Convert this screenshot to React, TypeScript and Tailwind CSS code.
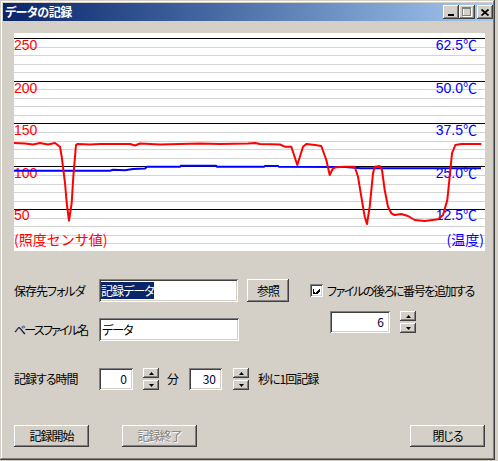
import React from "react";

const raised =
  "shadow-[inset_-1px_-1px_#404040,inset_1px_1px_#ffffff,inset_-2px_-2px_#808080,inset_2px_2px_#d4d0c8]";
const sunken =
  "shadow-[inset_1px_1px_#808080,inset_-1px_-1px_#ffffff,inset_2px_2px_#404040,inset_-2px_-2px_#d4d0c8]";
const jp = "font-['Noto_Sans_CJK_JP',sans-serif] [font-feature-settings:'palt']";

const red: [number, number][] = [
  [0, 110], [11, 110.5], [19, 111.5], [26, 110], [34, 111.5], [41, 110], [46, 113.7], [47.7, 123.7],
  [51, 150], [52.7, 170], [55, 187.7], [57.7, 170], [59.3, 143.7], [62, 112], [63.3, 111], [76, 111.5],
  [86, 111], [116, 111], [121, 112.5], [126, 110.5], [146, 111.5], [166, 111], [186, 110.5], [206, 111],
  [234, 110.5], [241, 110], [246, 111], [266, 111.5], [270.7, 113.7], [277.3, 113.7], [283.3, 132],
  [289, 113.7], [292.3, 111], [301, 112], [307.3, 113], [312.3, 127], [315.7, 142], [319, 135.3],
  [322.3, 134.3], [330.7, 133.7], [340.7, 133.7], [344, 143.7], [347.3, 163.7], [350.7, 183.7],
  [353, 191], [355.7, 173.7], [359, 140.3], [360.7, 133.7], [365.7, 133], [368, 137], [370.7, 157],
  [374, 173.7], [377.3, 180.3], [380.7, 182], [387.3, 181], [394, 183], [400.7, 187], [410.7, 188],
  [424, 186.3], [429, 182], [433.3, 167], [435.7, 143.7], [438, 120.3], [441.3, 112], [447.3, 111],
  [467.3, 111],
];

const blue: [number, number][] = [
  [0, 137.7], [96, 137.7], [99, 136.7], [111, 137.3], [119, 136], [131, 135.5], [133, 133.7],
  [166, 133.7], [167, 132.7], [202, 132.7], [203, 133.7], [250, 133.7], [251, 133], [264, 133],
  [265, 133.7], [331, 134], [347, 135.3], [467, 135.3],
];

const pts = (p: [number, number][]) => p.map(([x, y]) => `${x},${y}`).join(" ");

function Chart() {
  const majors = [5, 48, 90, 133, 176];
  const minors: number[] = [];
  for (let i = 1; i < 25; i++) {
    if (i % 5 !== 0) minors.push(Math.round(5 + i * 8.56));
  }
  const left = [
    ["250", 17],
    ["200", 60],
    ["150", 102],
    ["100", 145],
    ["50", 187],
  ] as const;
  const right = [
    ["62.5℃", 17],
    ["50.0℃", 60],
    ["37.5℃", 102],
    ["25.0℃", 145],
    ["12.5℃", 187],
  ] as const;
  return (
    <div className="h-[218px] w-[471px] bg-white">
      <svg width="471" height="218" viewBox="0 0 471 218" className="tracking-normal [font-feature-settings:normal]">
        <g shapeRendering="crispEdges">
          {minors.map((y) => (
            <line key={y} x1="0" x2="471" y1={y + 0.5} y2={y + 0.5} stroke="#d4d4d4" />
          ))}
          {majors.map((y) => (
            <line key={y} x1="0" x2="471" y1={y + 0.5} y2={y + 0.5} stroke="#000" />
          ))}
        </g>
        <g fontFamily="'Liberation Sans','Noto Sans CJK JP',sans-serif" fontSize="14">
          {left.map(([t, y]) => (
            <text key={t} x="0" y={y} fill="#ff0000">
              {t}
            </text>
          ))}
          {right.map(([t, y]) => (
            <text key={t} x="463" y={y} fill="#0000ff" textAnchor="end">
              {t}
            </text>
          ))}
        </g>
        <g fontFamily="'Noto Sans CJK JP',sans-serif" fontSize="14">
          <text x="0" y="212" fill="#ff0000">(照度センサ値)</text>
          <text x="470" y="212" fill="#0000ff" textAnchor="end">(温度)</text>
        </g>
        <polyline points={pts(blue)} fill="none" stroke="#0000ff" strokeWidth="2" />
        <polyline points={pts(red)} fill="none" stroke="#ff0000" strokeWidth="2" strokeLinejoin="round" />
      </svg>
    </div>
  );
}

function Button({ label, disabled, w = "w-[75px]", h = "h-[22px]" }: { label: string; disabled?: boolean; w?: string; h?: string }) {
  return (
    <div className={`${w} ${h} ${raised} flex shrink-0 items-center justify-center bg-[#d4d0c8] text-[12px]`}>
      <span className={disabled ? "text-[#808080] [text-shadow:1px_1px_#ffffff]" : "text-black"}>{label}</span>
    </div>
  );
}

function Spin() {
  return (
    <div className="flex h-[22px] w-[16px] shrink-0 flex-col justify-between">
      <div className={`${raised} flex h-[10px] items-center justify-center bg-[#d4d0c8]`}>
        <svg width="5" height="3" viewBox="0 0 5 3">
          <polygon points="2.5,0 5,3 0,3" fill="#000" />
        </svg>
      </div>
      <div className={`${raised} flex h-[10px] items-center justify-center bg-[#d4d0c8]`}>
        <svg width="5" height="3" viewBox="0 0 5 3">
          <polygon points="0,0 5,0 2.5,3" fill="#000" />
        </svg>
      </div>
    </div>
  );
}

function NumBox({ value, w }: { value: string; w: string }) {
  return (
    <div className={`${w} ${sunken} flex h-[22px] shrink-0 items-center justify-end bg-white pr-[6px] text-[12px] tracking-normal text-[#000040]`}>
      {value}
    </div>
  );
}

function TitleButton({ children, gap }: { children: React.ReactNode; gap?: boolean }) {
  return (
    <div className={`${raised} flex h-[14px] w-[16px] items-center justify-center bg-[#d4d0c8] ${gap ? "ml-[2px]" : ""}`}>
      {children}
    </div>
  );
}

export default function App() {
  return (
    <div className={`h-[461px] w-[498px] bg-[#d4d0c8] ${jp}`}>
      <div className="h-[460px] w-[495px] p-[3px] pr-[2px] shadow-[inset_-1px_-1px_#404040,inset_1px_1px_#d4d0c8,inset_-2px_-2px_#808080,inset_2px_2px_#ffffff]">
        <div className="flex h-[18px] items-center justify-between bg-gradient-to-r from-[#0a246a] to-[#a6caf0] pl-[2px]">
          <span className="text-[12px] font-bold leading-none tracking-[-0.5px] text-white">データの記録</span>
          <div className="flex items-center">
            <TitleButton>
              <svg width="8" height="7" viewBox="0 0 8 7">
                <rect x="1" y="5" width="6" height="2" fill="#000" />
              </svg>
            </TitleButton>
            <TitleButton>
              <svg width="10" height="10" viewBox="0 0 10 10" shapeRendering="crispEdges">
                <rect x="1.5" y="1.5" width="8" height="8" fill="none" stroke="#fff" />
                <rect x="0.5" y="0.5" width="8" height="8" fill="none" stroke="#808080" />
                <rect x="0" y="1" width="9" height="1" fill="#808080" />
              </svg>
            </TitleButton>
            <TitleButton gap>
              <svg width="8" height="7" viewBox="0 0 8 7">
                <path d="M0.5 0.5 L7.5 6.5 M7.5 0.5 L0.5 6.5" stroke="#000" strokeWidth="1.8" />
              </svg>
            </TitleButton>
          </div>
        </div>

        <div className="whitespace-nowrap pl-[11px] pt-[12px] text-[12px] tracking-[-1px] text-black">
          <Chart />

          <div className="mt-[28px] flex items-start">
            <div className="flex shrink-0 flex-col">
              <div className="flex h-[23px] items-center">
                <span className="w-[85px] shrink-0">保存先フォルダ</span>
                <div className={`${sunken} flex h-[23px] w-[139px] shrink-0 items-center bg-white pl-[2px]`}>
                  <span className="bg-[#0a246a] leading-[17px] text-white">記録データ</span>
                </div>
                <div className="ml-[9px]">
                  <Button label="参照" w="w-[42px]" h="h-[23px]" />
                </div>
              </div>
              <div className="mt-[16px] flex h-[23px] items-center">
                <span className="w-[85px] shrink-0 tracking-[-1.8px]">ベースファイル名</span>
                <div className={`${sunken} flex h-[23px] w-[140px] shrink-0 items-center bg-white pl-[3px]`}>データ</div>
              </div>
            </div>

            <div className="ml-[21px] flex shrink-0 flex-col">
              <div className="flex h-[23px] items-center">
                <div className={`${sunken} flex h-[13px] w-[13px] shrink-0 items-center justify-center bg-white`}>
                  <svg width="7" height="7" viewBox="0 0 7 7" shapeRendering="crispEdges">
                    <path d="M0 2h1v3h1v1h1v-1h1v-1h1v-1h1v-1h1v3h-1v1h-1v1h-1v1h-1v1h-1v-1h-1v-1h-1z" fill="#000" />
                  </svg>
                </div>
                <span className="ml-[4px] tracking-[-1.4px]">ファイルの後ろに番号を追加する</span>
              </div>
              <div className="ml-[20px] mt-[9px] flex items-center">
                <NumBox value="6" w="w-[60px]" />
                <div className="ml-[10px]">
                  <Spin />
                </div>
              </div>
            </div>
          </div>

          <div className="mt-[27px] flex h-[22px] items-center">
            <span className="w-[85px] shrink-0">記録する時間</span>
            <NumBox value="0" w="w-[34px]" />
            <div className="ml-[10px]">
              <Spin />
            </div>
            <span className="ml-[8px] w-[12px]">分</span>
            <div className="ml-[10px]">
              <NumBox value="30" w="w-[33px]" />
            </div>
            <div className="ml-[11px]">
              <Spin />
            </div>
            <span className="ml-[9px]">秒に1回記録</span>
          </div>

          <div className="mt-[35px] flex w-[471px] items-center justify-between">
            <div className="flex items-center gap-[33px]">
              <Button label="記録開始" />
              <Button label="記録終了" disabled />
            </div>
            <Button label="閉じる" />
          </div>
        </div>
      </div>
    </div>
  );
}
